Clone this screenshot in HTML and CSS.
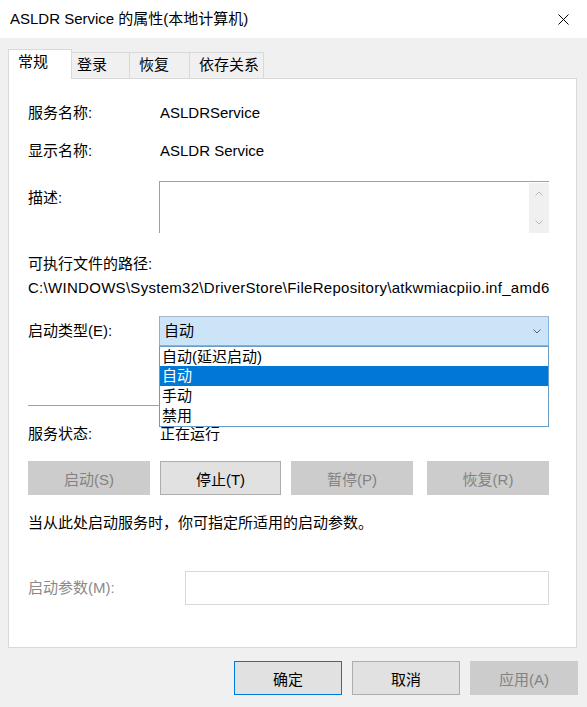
FILE: index.html
```html
<!DOCTYPE html>
<html lang="zh-CN">
<head>
<meta charset="utf-8">
<title>ASLDR Service 的属性(本地计算机)</title>
<link rel="stylesheet" href="styles.css">
</head>
<body>
<div class="titlebar">
  <span class="title">ASLDR Service 的属性(本地计算机)</span>
  <svg class="close" width="11" height="11" viewBox="0 0 11 11"><path d="M0.5 0.5L10.5 10.5M10.5 0.5L0.5 10.5" stroke="#000" stroke-width="1" fill="none"/></svg>
</div>
<div class="main">
  <div class="tabs">
    <div class="tab tab-general active">常规</div>
    <div class="tab tab-logon">登录</div>
    <div class="tab tab-recovery">恢复</div>
    <div class="tab tab-deps">依存关系</div>
  </div>
  <div class="panel">
    <div class="row row-name"><span>服务名称:</span><span class="value">ASLDRService</span></div>
    <div class="row row-display"><span>显示名称:</span><span class="value">ASLDR Service</span></div>
    <div class="row row-desc">
      <span class="desc-label">描述:</span>
      <div class="desc-box">
        <div class="scrollbar">
          <svg width="8" height="5" viewBox="0 0 8 5"><path d="M0.5 4.5L4 1L7.5 4.5" stroke="#b8b8b8" fill="none"/></svg>
          <svg width="8" height="5" viewBox="0 0 8 5"><path d="M0.5 0.5L4 4L7.5 0.5" stroke="#b8b8b8" fill="none"/></svg>
        </div>
      </div>
    </div>
    <div class="path-label">可执行文件的路径:</div>
    <div class="path">C:\WINDOWS\System32\DriverStore\FileRepository\atkwmiacpiio.inf_amd6</div>
    <div class="row row-startup">
      <span class="startup-label">启动类型(E):</span>
      <div class="combo">
        <span class="combo-text">自动</span>
        <svg class="combo-chevron" width="8" height="5" viewBox="0 0 8 5"><path d="M0.5 0.5L4 4L7.5 0.5" stroke="#606060" fill="none"/></svg>
        <ul class="dropdown">
          <li class="item first">自动(延迟启动)</li>
          <li class="item selected">自动</li>
          <li class="item">手动</li>
          <li class="item">禁用</li>
        </ul>
      </div>
    </div>
    <div class="sep"></div>
    <div class="row row-status"><span>服务状态:</span><span class="value">正在运行</span></div>
    <div class="buttons">
      <button class="btn disabled w122">启动(S)</button>
      <button class="btn w121">停止(T)</button>
      <button class="btn disabled w122">暂停(P)</button>
      <button class="btn disabled w122 last">恢复(R)</button>
    </div>
    <div class="hint">当从此处启动服务时，你可指定所适用的启动参数。</div>
    <div class="row-param">
      <span class="param-label">启动参数(M):</span>
      <div class="param-input"></div>
    </div>
  </div>
</div>
<div class="footer">
  <button class="btn fbtn default">确定</button>
  <button class="btn fbtn">取消</button>
  <button class="btn fbtn disabled">应用(A)</button>
</div>
</body>
</html>
```
FILE: styles.css
```css
* { box-sizing: border-box; }
html, body { margin: 0; padding: 0; }
body {
  width: 587px;
  height: 707px;
  overflow: hidden;
  background: #f0f0f0;
  font-family: "Liberation Sans", "Noto Sans CJK SC", sans-serif;
  font-size: 15px;
  line-height: 20px;
  color: #000;
}
.titlebar {
  height: 38px;
  background: #fff;
  display: flex;
  align-items: center;
  justify-content: space-between;
  padding: 0 18px 0 10px;
}
.title { font-size: 15px; }
.close { display: block; }

.main { padding: 11px 10px 0 8px; }
.tabs {
  display: flex;
  align-items: flex-end;
  height: 29px;
}
.tab {
  height: 26px;
  line-height: 24px;
  border: 1px solid #d9d9d9;
  border-bottom: none;
  border-right: none;
  background: #f0f0f0;
  padding-left: 9px;
}
.tab.active {
  height: 30px;
  line-height: 24px;
  margin-bottom: -1px;
  position: relative;
  z-index: 1;
  background: #fff;
  border-right: 1px solid #d9d9d9;
}
.tab-general { width: 64px; }
.tab-logon { width: 57px; padding-left: 5px; border-left: none; }
.tab-recovery { width: 60px; }
.tab-deps { width: 75px; border-right: 1px solid #d9d9d9; }

.panel {
  background: #fff;
  border: 1px solid #d9d9d9;
  height: 570px;
  padding: 0 27px 0 19px;
}
.row {
  display: grid;
  grid-template-columns: 131px 1fr;
}
.value { padding-left: 1px; }
.row-name { margin-top: 24px; }
.row-display { margin-top: 18px; }
.row-desc { margin-top: 20px; height: 52px; }
.desc-label { margin-top: 7px; }
.desc-box {
  position: relative;
  height: 52px;
  border-top: 1px solid #a0a0a0;
  border-left: 1px solid #a0a0a0;
  display: flex;
  justify-content: flex-end;
  padding: 1px 0 0 0;
}
.scrollbar {
  width: 20px;
  height: 50px;
  background: #f0f0f0;
  display: flex;
  flex-direction: column;
  align-items: center;
  justify-content: space-between;
  padding: 8px 0 8px;
}
.scrollbar svg { display: block; }
.path-label { margin-top: 21px; }
.path {
  margin-top: 4px;
  white-space: nowrap;
  letter-spacing: 0.29px;
}
.row-startup { margin-top: 18px; height: 30px; }
.startup-label { line-height: 30px; }
.combo {
  position: relative;
  height: 30px;
  background: #cce4f7;
  border: 1px solid #86b3de;
  border-top-color: #a7b7c7;
  display: flex;
  align-items: center;
  justify-content: space-between;
  padding: 0 7px 0 4px;
}
.combo-chevron { display: block; }
.dropdown {
  position: absolute;
  top: 29px;
  left: -1px;
  right: -1px;
  margin: 0;
  padding: 0;
  list-style: none;
  background: #fff;
  border: 1px solid #6a9cc8;
  z-index: 5;
}
.item {
  height: 20px;
  line-height: 20px;
  padding-left: 2px;
}
.item.first { height: 19px; line-height: 19px; }
.item.selected { background: #0078d7; color: #fff; }
.sep {
  margin-top: 59px;
  height: 1px;
  background: #a0a0a0;
}
.row-status { margin-top: 18px; }
.buttons {
  margin-top: 17px;
  display: flex;
  gap: 10px;
}
.btn {
  font-family: inherit;
  font-size: 15px;
  height: 34px;
  background: #e1e1e1;
  border: 1px solid #adadad;
  color: #000;
  padding: 0;
  margin: 0;
}
.btn.disabled {
  background: #cccccc;
  border-color: #cccccc;
  color: #838383;
}
.w122 { width: 122px; }
.w121 { width: 121px; }
.btn.last { margin-left: 4px; }
.hint { margin-top: 18px; }
.row-param {
  margin-top: 38px;
  display: grid;
  grid-template-columns: 157px 1fr;
  height: 34px;
}
.param-label { color: #8a8a8a; line-height: 34px; }
.param-input {
  height: 34px;
  border: 1px solid #d9d9d9;
  background: #fff;
}
.footer {
  margin-top: 13px;
  display: flex;
  justify-content: flex-end;
  gap: 10px;
  padding-right: 9px;
}
.fbtn { width: 108px; }
.fbtn.default { border-color: #0078d7; }
```
